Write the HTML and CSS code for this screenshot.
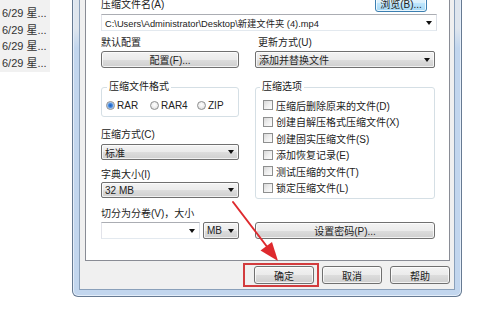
FILE: index.html
```html
<!DOCTYPE html>
<html lang="zh-CN">
<head>
<meta charset="utf-8">
<title>压缩文件名和参数</title>
<link rel="stylesheet" href="styles.css">
</head>
<body>
<div class="page">
  <div class="sidebar">
    <div class="srow">6/29 星...</div>
    <div class="srow">6/29 星...</div>
    <div class="srow">6/29 星...</div>
    <div class="srow">6/29 星...</div>
  </div>
  <div class="window">
    <div class="dialog">
      <div class="panel">
        <div class="toprow">
          <span class="lbl">压缩文件名(A)</span>
          <button class="btn browse">浏览(B)...</button>
        </div>
        <div class="combo edit fname"><span class="val path">C:\Users\Administrator\Desktop\新建文件夹 (4).mp4</span><i class="arrow"></i></div>
        <div class="grid">
          <div class="col">
            <div class="lbl gap6">默认配置</div>
            <button class="btn ctl">配置(F)...</button>
          </div>
          <div class="col">
            <div class="lbl gap6 ind">更新方式(U)</div>
            <div class="combo drop ctl"><span class="val">添加并替换文件</span><i class="arrow"></i></div>
          </div>
          <div class="col">
            <fieldset class="group fmt">
              <legend>压缩文件格式</legend>
              <div class="radios">
                <label class="radio w44"><span class="rb on"></span>RAR</label>
                <label class="radio w47"><span class="rb"></span>RAR4</label>
                <label class="radio"><span class="rb"></span>ZIP</label>
              </div>
            </fieldset>
            <div class="lbl method">压缩方式(C)</div>
            <div class="combo drop small m3"><span class="val">标准</span><i class="arrow"></i></div>
            <div class="lbl dict">字典大小(I)</div>
            <div class="combo drop small m1"><span class="val">32 MB</span><i class="arrow"></i></div>
          </div>
          <div class="col">
            <fieldset class="group opts">
              <legend>压缩选项</legend>
              <label class="check"><span class="cb"></span>压缩后删除原来的文件(D)</label>
              <label class="check"><span class="cb"></span>创建自解压格式压缩文件(X)</label>
              <label class="check"><span class="cb"></span>创建固实压缩文件(S)</label>
              <label class="check"><span class="cb"></span>添加恢复记录(E)</label>
              <label class="check"><span class="cb"></span>测试压缩的文件(T)</label>
              <label class="check"><span class="cb"></span>锁定压缩文件(L)</label>
            </fieldset>
          </div>
          <div class="col">
            <div class="lbl split-lbl">切分为分卷(V)，大小</div>
            <div class="split">
              <div class="combo edit vol"><span class="val"></span><i class="arrow"></i></div>
              <div class="combo drop unit"><span class="val">MB</span><i class="arrow"></i></div>
            </div>
          </div>
          <div class="col end">
            <button class="btn ctl">设置密码(P)...</button>
          </div>
        </div>
      </div>
      <div class="actions">
        <button class="btn act">确定</button>
        <button class="btn act">取消</button>
        <button class="btn act">帮助</button>
      </div>
    </div>
  </div>
  <div class="highlight"></div>
  <svg class="annot" width="500" height="333" viewBox="0 0 500 333">
    <line x1="233" y1="202" x2="268" y2="248" stroke="#de2a2e" stroke-width="2" stroke-linecap="round"/>
    <polygon points="278,261 260.5,250.5 272,242" fill="#de2a2e"/>
  </svg>
</div>
</body>
</html>
```

FILE: styles.css
```css
* { box-sizing: border-box; }

body {
  margin: 0;
  font-family: "Liberation Sans", "Noto Sans CJK SC", sans-serif;
  font-size: 10px;
  color: #222;
}

.page {
  position: relative;
  width: 500px;
  height: 333px;
  display: flex;
  align-items: flex-start;
  background: #fff;
  overflow: hidden;
}

/* left list behind the dialog */
.sidebar {
  width: 50px;
  height: 72px;
  background: #f1f1f1;
  padding: 5px 0 0 2px;
  font-size: 11px;
  color: #333;
}
.srow {
  line-height: 16.7px;
  white-space: nowrap;
}

/* window frame */
.window {
  margin-left: 22px;
  width: 390px;
  height: 297px;
  display: flex;
  border: 1px solid #667a92;
  border-top: 0;
  border-radius: 0 0 6px 6px;
  padding: 0 6px 6px;
  background: linear-gradient(#dfe6ee 0, #dfe6ee 28px, #c2d6ee 48px, #c2d6ee 100%);
  box-shadow: inset 0 -1px 0 #e4eefa, inset 1px 0 0 #e4eefa, inset -1px 0 0 #e4eefa;
}

.dialog {
  flex: 1;
  display: flex;
  flex-direction: column;
  background: #f0f0f0;
  border: 1px solid #8aa0ba;
  border-top: 0;
  padding: 0 4px 0 5px;
}

.panel {
  height: 261px;
  display: flex;
  flex-direction: column;
  background: #fff;
  border: 1px solid #898c95;
  border-top: 0;
  padding: 0 12px 0 15px;
}

.lbl {
  line-height: 12px;
  height: 12px;
  white-space: nowrap;
}

.toprow {
  display: flex;
  justify-content: space-between;
  align-items: flex-end;
  height: 18px;
  margin-top: -6px;
  padding-right: 10px;
}
.toprow .lbl { margin-bottom: 1px; }

/* buttons */
.btn {
  display: flex;
  align-items: center;
  justify-content: center;
  padding: 0;
  font: inherit;
  color: inherit;
  border: 1px solid #707070;
  border-radius: 3px;
  background: linear-gradient(#f3f3f3 0%, #ebebeb 50%, #dddddd 51%, #cfcfcf 100%);
  box-shadow: inset 0 0 0 1px rgba(255, 255, 255, 0.75);
  white-space: nowrap;
}
.browse {
  width: 52px;
  height: 18px;
  border-color: #3c7fb1;
  background: linear-gradient(#eaf6fd 0%, #d9f0fc 50%, #bee6fd 51%, #a7d9f5 100%);
}

/* combos */
.combo {
  display: flex;
  align-items: center;
  padding: 0 4px 0 3px;
  white-space: nowrap;
  overflow: hidden;
}
.combo .val { flex: 1; overflow: hidden; }
.combo .path { font-size: 9.3px; }
.combo.edit {
  background: #fff;
  border: 1px solid;
  border-color: #abadb3 #dbdfe6 #e3e9ef #e2e3ea;
}
.combo.drop {
  border: 1px solid #707070;
  border-radius: 2px;
  background: linear-gradient(#f3f3f3 0%, #ebebeb 50%, #dddddd 51%, #cfcfcf 100%);
  box-shadow: inset 0 0 0 1px rgba(255, 255, 255, 0.7);
}
.arrow {
  flex: none;
  width: 0;
  height: 0;
  border-left: 3.5px solid transparent;
  border-right: 3.5px solid transparent;
  border-top: 4px solid #111;
}

.fname { margin-top: 2px; height: 17px; }

/* grid of controls */
.grid {
  display: grid;
  grid-template-columns: 138px 180px;
  column-gap: 16px;
}
.col {
  display: flex;
  flex-direction: column;
}
.col.end { justify-content: flex-end; }

.gap6 { margin-top: 6px; }
.ind { padding-left: 3px; }
.ctl { margin-top: 2px; height: 17px; width: 100%; }

/* group boxes */
.group {
  margin: 13px 0 0;
  min-width: 0;
  border: 1px solid #d5dfe5;
  border-radius: 3px;
}
.group legend {
  padding: 0 2px;
  line-height: 12px;
}
.fmt { padding: 6px 4px 5px; }
.fmt legend { margin-left: 1px; }
.opts { padding: 4px 4px 2px; }

.radios {
  display: flex;
  align-items: center;
  height: 12px;
}
.radio {
  display: flex;
  align-items: center;
  gap: 2px;
}
.w44 { width: 44px; }
.w47 { width: 47px; }
.rb {
  width: 9px;
  height: 9px;
  border-radius: 50%;
  border: 1px solid #8e8f8f;
  background: radial-gradient(circle at 50% 40%, #ffffff 0, #f2f2f2 40%, #d6d6d6 100%);
}
.rb.on {
  background: radial-gradient(circle at 50% 50%, #1f5fc0 0, #3d83db 1.8px, #9cc2ee 3px, #eef3f9 4px);
}

.check {
  display: flex;
  align-items: center;
  height: 16.5px;
  padding-left: 3px;
  white-space: nowrap;
}
.cb {
  width: 10px;
  height: 10px;
  margin-right: 3px;
  border: 1px solid #8e8f8f;
  background: linear-gradient(135deg, #d8d8d8 0%, #eeeeee 50%, #fdfdfd 100%);
}

.method { margin-top: 12px; }
.small { height: 16px; }
.m3 { margin-top: 3px; }
.dict { margin-top: 9px; }
.m1 { margin-top: 1px; }

.split-lbl { margin-top: 9px; }
.split {
  display: flex;
  gap: 3px;
  margin-top: 2px;
  height: 17px;
}
.vol { width: 99px; }
.unit { flex: 1; }

/* dialog buttons */
.actions {
  display: flex;
  justify-content: flex-end;
  gap: 8px;
  padding-top: 5px;
}
.act { width: 60px; height: 18px; }

/* annotation overlay */
.highlight {
  position: absolute;
  left: 243px;
  top: 263px;
  width: 76px;
  height: 24px;
  border: 2px solid #d23c3e;
}
.annot {
  position: absolute;
  left: 0;
  top: 0;
  pointer-events: none;
}
```
